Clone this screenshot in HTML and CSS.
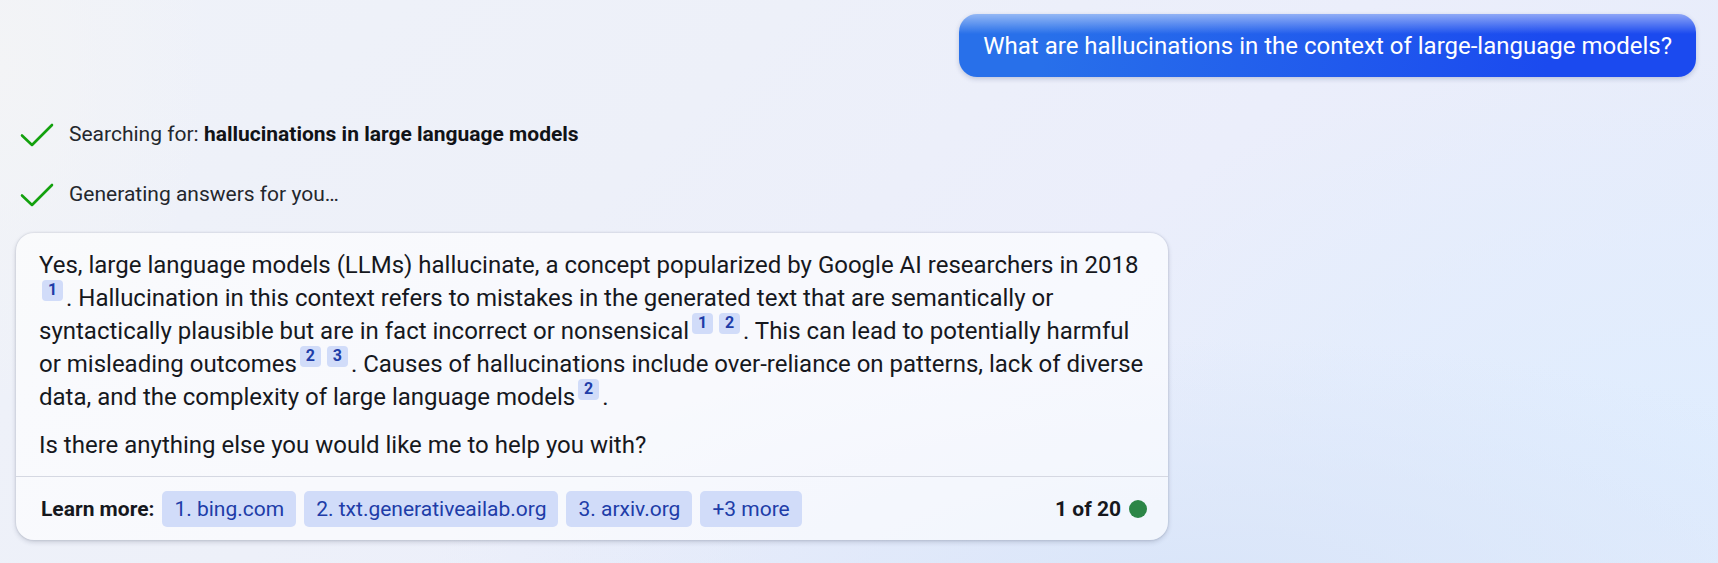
FILE: index.html
```html
<!DOCTYPE html>
<html lang="en">
<head>
<meta charset="utf-8">
<meta name="viewport" content="width=device-width, initial-scale=1">
<title>Chat</title>
<link rel="stylesheet" href="styles.css">
</head>
<body>
<main class="chat">
  <div class="question">What are hallucinations in the context of large-language models?</div>

  <ul class="steps">
    <li class="step">
      <svg class="check" viewBox="0 0 34 24" aria-hidden="true"><path d="M2 12.5 L12 22 L32 2"/></svg>
      <span>Searching for: <strong>hallucinations in large language models</strong></span>
    </li>
    <li class="step">
      <svg class="check" viewBox="0 0 34 24" aria-hidden="true"><path d="M2 12.5 L12 22 L32 2"/></svg>
      <span>Generating answers for you…</span>
    </li>
  </ul>

  <article class="answer">
    <div class="answer-body">
      <p>Yes, large language models (LLMs) hallucinate, a concept popularized by Google AI researchers in 2018 <a class="cite" href="#s1">1</a>. Hallucination in this context refers to mistakes in the generated text that are semantically or syntactically plausible but are in fact incorrect or nonsensical<a class="cite" href="#s1">1</a><a class="cite" href="#s2">2</a>. This can lead to potentially harmful or misleading outcomes<a class="cite" href="#s2">2</a><a class="cite" href="#s3">3</a>. Causes of hallucinations include over-reliance on patterns, lack of diverse data, and the complexity of large language models<a class="cite" href="#s2">2</a>.</p>
      <p>Is there anything else you would like me to help you with?</p>
    </div>
    <footer class="sources">
      <span class="label">Learn more:</span>
      <a class="chip" id="s1" href="#s1">1. bing.com</a>
      <a class="chip" id="s2" href="#s2">2. txt.generativeailab.org</a>
      <a class="chip" id="s3" href="#s3">3. arxiv.org</a>
      <button class="chip" type="button">+3 more</button>
      <span class="count">1 of 20</span>
      <span class="dot"></span>
    </footer>
  </article>
</main>
</body>
</html>
```
FILE: styles.css
```css
* {
  box-sizing: border-box;
}

body {
  margin: 0;
  min-height: 100vh;
  font-family: Roboto, "Liberation Sans", sans-serif;
  font-size: 24px;
  line-height: 33px;
  color: #16181d;
  background:
    radial-gradient(ellipse 12% 60% at 0% 12%, #f3f4f6, rgba(243, 244, 246, 0)),
    radial-gradient(ellipse 45% 45% at 70% 105%, #d9e5f9, rgba(217, 229, 249, 0)),
    radial-gradient(ellipse 40% 70% at 98% 80%, #e0edfe, rgba(224, 237, 254, 0)),
    linear-gradient(135deg, #eff2f9 0%, #edf0f9 35%, #ebeefb 60%, #e4ebfa 100%);
}

.chat {
  display: flex;
  flex-direction: column;
  padding: 14px 22px 23px 16px;
}

.question {
  align-self: flex-end;
  padding: 16px 24px 14px;
  border-radius: 18px;
  color: #fff;
  background:
    linear-gradient(to bottom, rgba(255, 255, 255, 0.5), rgba(255, 255, 255, 0) 20px),
    linear-gradient(100deg, #2870ea 12%, #1b4aef 80%);
  box-shadow: 0 2px 5px rgba(30, 50, 110, 0.22);
}

.steps {
  display: flex;
  flex-direction: column;
  gap: 27px;
  margin: 41px 0 0;
  padding: 0 4px;
  list-style: none;
  font-size: 21px;
}

.step {
  display: flex;
  align-items: center;
  gap: 15px;
  color: #24272d;
}

.step strong {
  color: #111317;
}

.check {
  width: 34px;
  height: 24px;
  fill: none;
  stroke: #13a10e;
  stroke-width: 2.6;
  stroke-linecap: round;
  stroke-linejoin: round;
}

.answer {
  width: 100%;
  max-width: 1152px;
  margin-top: 22px;
  border-radius: 18px;
  background: rgba(255, 255, 255, 0.62);
  box-shadow: 0 0 2px rgba(40, 50, 80, 0.22), 0 2px 5px rgba(40, 50, 80, 0.2);
}

.answer-body {
  padding: 16px 20px 14px 23px;
}

.answer-body p {
  margin: 0;
}

.answer-body p + p {
  margin-top: 15px;
}

.cite {
  display: inline-block;
  width: 21px;
  height: 21px;
  margin: -6px 3px 0;
  border-radius: 4px;
  background: #d1dcf9;
  color: #203ca8;
  font-size: 16px;
  font-weight: 700;
  line-height: 20px;
  text-align: center;
  text-decoration: none;
  vertical-align: 11px;
}

.sources {
  display: flex;
  flex-wrap: wrap;
  align-items: center;
  gap: 8px;
  padding: 14px 21px 13px 25px;
  border-top: 1px solid #d5d8e2;
  font-size: 21px;
}

.label,
.count {
  font-weight: 700;
}

.count {
  margin-left: auto;
}

.chip {
  height: 36px;
  padding: 0 12px;
  border: 0;
  border-radius: 5px;
  background: #d1dcf9;
  color: #203ca8;
  font: inherit;
  line-height: 36px;
  text-decoration: none;
}

.dot {
  width: 18px;
  height: 18px;
  border-radius: 50%;
  background: #2c8647;
}
```
